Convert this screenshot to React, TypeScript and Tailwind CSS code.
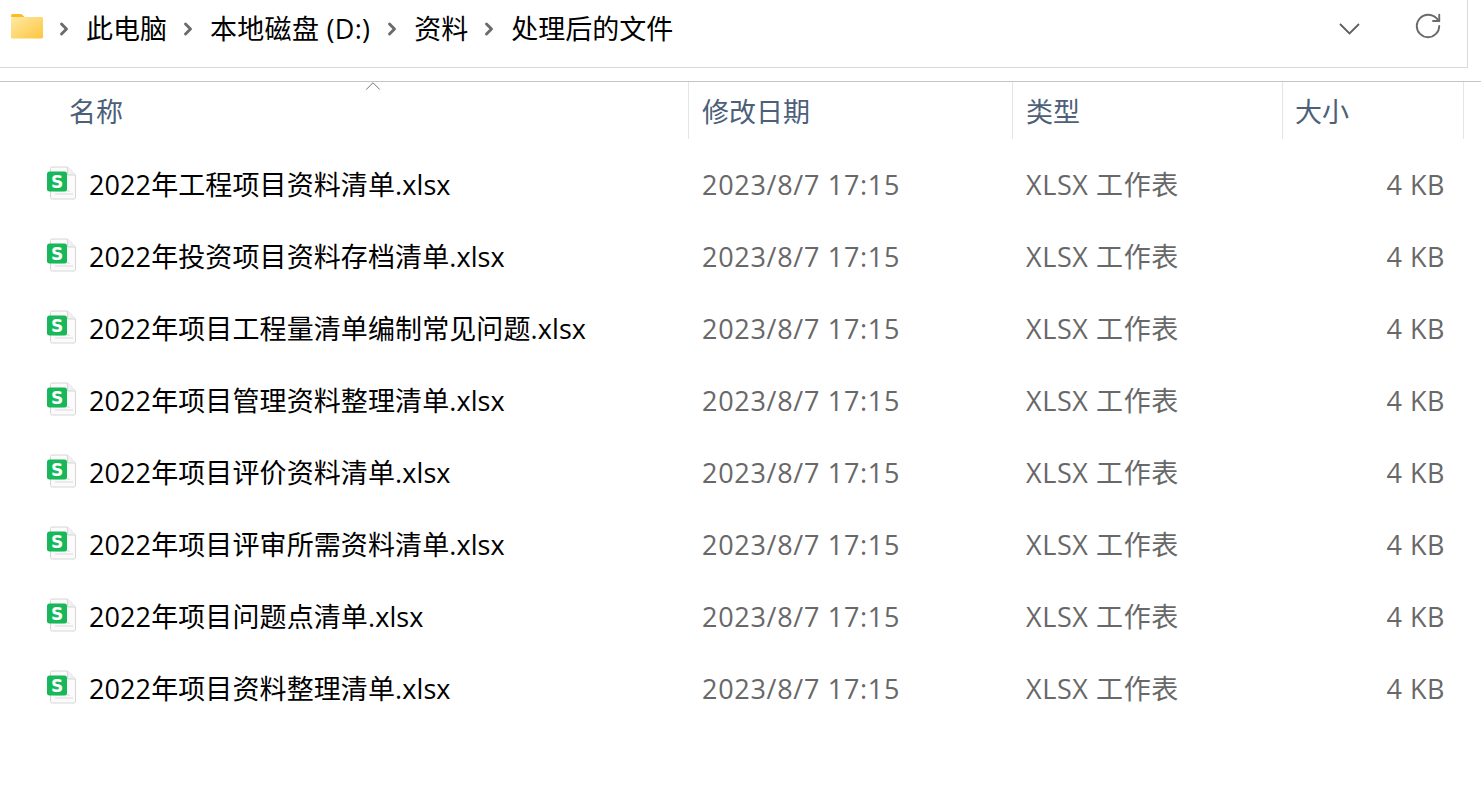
import { ChevronRight, ChevronUp, RotateCw } from "lucide-react";

const files = [
  "2022年工程项目资料清单.xlsx",
  "2022年投资项目资料存档清单.xlsx",
  "2022年项目工程量清单编制常见问题.xlsx",
  "2022年项目管理资料整理清单.xlsx",
  "2022年项目评价资料清单.xlsx",
  "2022年项目评审所需资料清单.xlsx",
  "2022年项目问题点清单.xlsx",
  "2022年项目资料整理清单.xlsx",
];

const crumbs = [
  { label: "此电脑", gap: "mr-[11px]" },
  { label: "本地磁盘 (D:)", gap: "mr-[12px] tracking-[0.3px]" },
  { label: "资料", gap: "mr-[11px]" },
  { label: "处理后的文件", gap: "mr-[11px]" },
];

const FolderIcon = () => (
  <svg width="33" height="26" viewBox="0 0 33 26" className="shrink-0 -mt-[6px]">
    <defs>
      <linearGradient id="folderFill" x1="0" y1="0" x2="1" y2="1">
        <stop offset="0" stopColor="#ffe9a3" />
        <stop offset="1" stopColor="#fcc63f" />
      </linearGradient>
    </defs>
    <path d="M1 3C1 1.500 2 1 3 1h7.500c1 0 1.500.5 2.500 1.500L14.500 4H1z" fill="#fdbb1f" />
    <rect x="1" y="4" width="32" height="21.500" rx="1.500" fill="url(#folderFill)" />
  </svg>
);

const SheetIcon = () => (
  <svg width="31" height="34" viewBox="0 0 31 34" className="shrink-0">
    <path
      d="M3.500 2.500A1.500 1.500 0 0 1 5 1h15.500l8 8v22.500a1.500 1.500 0 0 1-1.500 1.500H5a1.500 1.500 0 0 1-1.500-1.500z"
      fill="#fbfbfb"
      stroke="#d6d6d6"
    />
    <path d="M20.500 1v8h8" fill="#f0f0f0" stroke="#d6d6d6" />
    <path d="M8 28h18M8 25h7M18 25h5" stroke="#e4e6e8" strokeWidth="1.500" />
    <rect x="0" y="5.500" width="20" height="20" rx="2.500" fill="#17b85a" />
    <text
      x="10"
      y="21.500"
      textAnchor="middle"
      fontSize="17"
      fontWeight="700"
      fill="#ffffff"
      fontFamily="'DejaVu Sans', sans-serif"
    >
      S
    </text>
  </svg>
);

const HeaderCell = ({ label, className }: { label: string; className: string }) => (
  <div className={`flex items-center h-full pt-[4px] border-r border-[#e5e5e5] text-[27px] text-[#4c607a] ${className}`}>
    {label}
  </div>
);

export default function App() {
  return (
    <div className="w-[1481px] h-[796px] overflow-hidden bg-white font-['Open_Sans','Noto_Sans_CJK_SC',sans-serif]">
      {/* Address bar */}
      <div className="flex h-[82px] border-b border-[#c4c4c4]">
        <div className="flex items-center w-[1468px] h-[68px] border-r border-b border-[#d9d9d9] pl-[10px] pb-[10px]">
          <FolderIcon />
          <div className="flex items-center text-[27px] text-black ml-[11px]">
            {crumbs.map((c) => (
              <div key={c.label} className="flex items-center">
                <ChevronRight size={20} strokeWidth={3.500} className="text-[#6b6b6b] mr-[12px]" />
                <span className={`whitespace-nowrap leading-[38px] ${c.gap}`}>{c.label}</span>
              </div>
            ))}
          </div>
          <div className="ml-auto flex items-center -mt-[6px]">
            <svg width="21" height="12" viewBox="0 0 21 12" fill="none" className="mt-[7px] mr-[53px] text-[#5f5f5f]">
              <path d="M1 1l9.500 9.500L20 1" stroke="currentColor" strokeWidth="1.800" />
            </svg>
            <RotateCw size={30} strokeWidth={1.500} className="text-[#6a6a6a] mr-[24px]" />
          </div>
        </div>
      </div>

      {/* Column header */}
      <div className="relative flex h-[57px] w-[1464px]">
        <ChevronUp size={26} strokeWidth={0.900} className="absolute left-[360px] -top-[9px] text-[#6f6f6f]" />
        <HeaderCell label="名称" className="w-[689px] pl-[69px]" />
        <HeaderCell label="修改日期" className="w-[324px] pl-[13px]" />
        <HeaderCell label="类型" className="w-[270px] pl-[13px]" />
        <HeaderCell label="大小" className="w-[181px] pl-[12px]" />
      </div>

      {/* File rows */}
      <div className="mt-[10px] w-[1464px]">
        {files.map((f) => (
          <div key={f} className="flex items-center h-[72px] text-[27px]">
            <div className="flex items-center w-[689px] pl-[47px]">
              <div className="-mt-[5px]">
                <SheetIcon />
              </div>
              <span className="ml-[11px] whitespace-nowrap text-black tracking-[0.1px]">{f}</span>
            </div>
            <div className="w-[324px] pl-[13px] text-[#686868] whitespace-nowrap tracking-[0.7px]">2023/8/7 17:15</div>
            <div className="w-[270px] pl-[13px] text-[#686868] whitespace-nowrap tracking-[0.6px]">XLSX 工作表</div>
            <div className="w-[162px] text-right text-[#686868] whitespace-nowrap tracking-[0.5px]">4 KB</div>
          </div>
        ))}
      </div>
    </div>
  );
}
